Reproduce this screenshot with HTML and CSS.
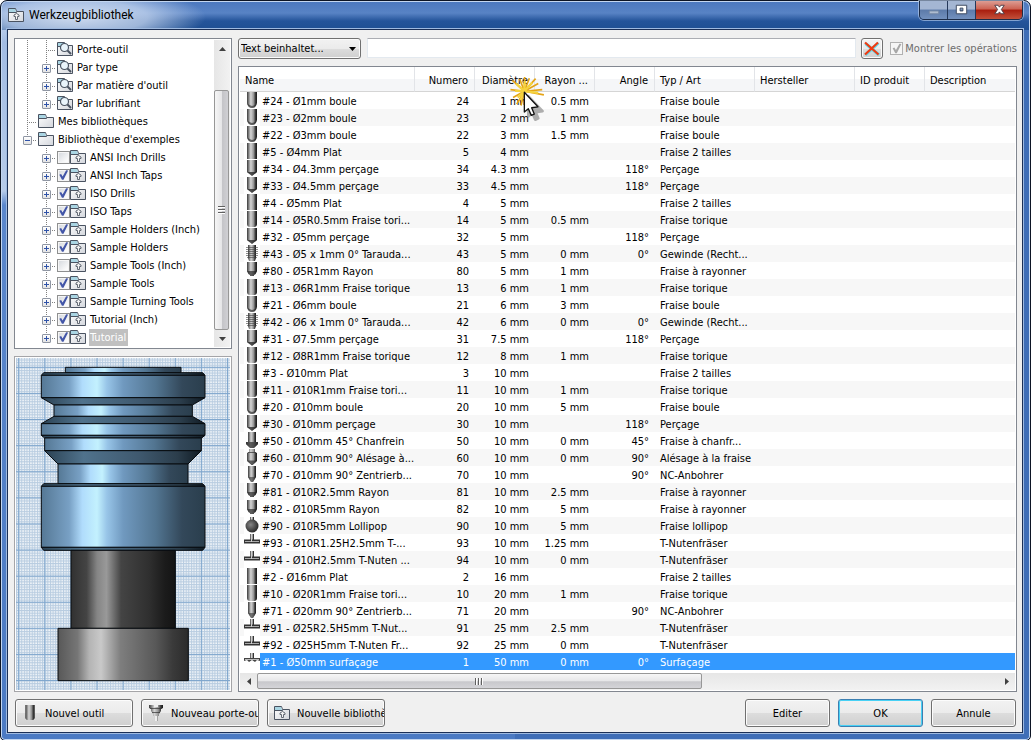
FILE: index.html
```html
<!DOCTYPE html>
<html lang="fr">
<head>
<meta charset="utf-8">
<title>Werkzeugbibliothek</title>
<link rel="stylesheet" href="styles.css">
</head>
<body>
<svg class="defs" aria-hidden="true">
  <defs>
    <linearGradient id="steel" x1="0" x2="1" y1="0" y2="0">
      <stop offset="0" stop-color="#3a3a3a"/><stop offset=".15" stop-color="#777"/><stop offset=".38" stop-color="#d6d6d6"/><stop offset=".65" stop-color="#999"/><stop offset=".85" stop-color="#3a3a3a"/><stop offset="1" stop-color="#161616"/>
    </linearGradient>
    <radialGradient id="sphere" cx=".4" cy=".4" r=".6">
      <stop offset="0" stop-color="#858585"/><stop offset="1" stop-color="#2b2b2b"/>
    </radialGradient>
    <linearGradient id="folderfill" x1="0" x2="1" y1="0" y2="1">
      <stop offset="0" stop-color="#fff"/><stop offset="1" stop-color="#d3d6dc"/>
    </linearGradient>
    <linearGradient id="blue" x1="0" x2="1" y1="0" y2="0">
      <stop offset="0" stop-color="#557895"/><stop offset=".17" stop-color="#78a0c4"/><stop offset=".25" stop-color="#b0dcfc"/><stop offset=".34" stop-color="#c3f1fe"/><stop offset=".4" stop-color="#98c5e8"/><stop offset=".5" stop-color="#7099bf"/><stop offset=".7" stop-color="#527591"/><stop offset=".86" stop-color="#33485a"/><stop offset="1" stop-color="#2a3e4d"/>
    </linearGradient>
    <linearGradient id="slope" x1="0" x2="1" y1="0" y2="0">
      <stop offset="0" stop-color="#2b4254"/><stop offset=".25" stop-color="#50728c"/><stop offset=".6" stop-color="#3f596f"/><stop offset=".85" stop-color="#2b3d4b"/><stop offset="1" stop-color="#101b24"/>
    </linearGradient>
    <linearGradient id="coat" x1="0" x2="1" y1="0" y2="0">
      <stop offset="0" stop-color="#313131"/><stop offset=".15" stop-color="#444"/><stop offset=".25" stop-color="#858585"/><stop offset=".34" stop-color="#999"/><stop offset=".48" stop-color="#444"/><stop offset=".75" stop-color="#2f2f2f"/><stop offset=".9" stop-color="#1b1b1b"/><stop offset="1" stop-color="#141414"/>
    </linearGradient>
    <linearGradient id="cutter" x1="0" x2="1" y1="0" y2="0">
      <stop offset="0" stop-color="#585858"/><stop offset=".15" stop-color="#767676"/><stop offset=".24" stop-color="#b4b4b4"/><stop offset=".33" stop-color="#c9c9c9"/><stop offset=".48" stop-color="#7e7e7e"/><stop offset=".75" stop-color="#585858"/><stop offset=".88" stop-color="#3a3a3a"/><stop offset="1" stop-color="#2b2b2b"/>
    </linearGradient>
    <pattern id="minor" x="56" y="52" width="7.83" height="7.83" patternUnits="userSpaceOnUse">
      <path d="M0 1.5H7.83M1.5 0V7.83" stroke="#9fbbd6" stroke-width="3" opacity=".7"/>
    </pattern>
    <pattern id="major" x="54.5" y="50.5" width="78.3" height="78.3" patternUnits="userSpaceOnUse">
      <path d="M0 1.5H78.3M1.5 0V78.3" stroke="#7fa6cd" stroke-width="3"/>
    </pattern>
  </defs>
  <symbol id="t-ball" viewBox="0 0 16 17"><path d="M3 0H13V11Q12 16 8 16Q4 16 3 11Z" fill="url(#steel)"/><path d="M3 11Q4 16 8 16Q12 16 13 11Q10 14 8 14Q6 14 3 11Z" fill="#333" opacity=".7"/></symbol>
  <symbol id="t-flat" viewBox="0 0 16 17"><path d="M3 0H13V16H3Z" fill="url(#steel)"/></symbol>
  <symbol id="t-bull" viewBox="0 0 16 17"><path d="M3 0H13V13Q13 16 10 16H6Q3 16 3 13Z" fill="url(#steel)"/></symbol>
  <symbol id="t-drill" viewBox="0 0 16 17"><path d="M3 0H13V12L8 16L3 12Z" fill="url(#steel)"/><path d="M3 12H13L8 16Z" fill="#222" opacity=".75"/></symbol>
  <symbol id="t-radius" viewBox="0 0 16 17"><path d="M3 0H13V9Q12 12 10 13V14H6V13Q4 12 3 9Z" fill="url(#steel)"/><path d="M3 9H13Q12 12 10 13V14H6V13Q4 12 3 9Z" fill="#222" opacity=".65"/></symbol>
  <symbol id="t-tap" viewBox="0 0 16 17"><path d="M4 0H12V13L11 16H5L4 13Z" fill="url(#steel)"/><path d="M2 2.500H14M2 4.500H14M2 6.500H14M2 8.500H14M2 10.500H14M3 12.500H13" stroke="#444" opacity=".6"/></symbol>
  <symbol id="t-chamfer" viewBox="0 0 16 17"><path d="M4 0H12V10H4Z" fill="url(#steel)"/><path d="M2 10H14V12L10 16H6L2 12Z" fill="url(#steel)"/><path d="M2 10H14V12L10 16H6L2 12Z" fill="#333" opacity=".75"/></symbol>
  <symbol id="t-ream" viewBox="0 0 16 17"><path d="M5 0H11V3L13 4V12L9 16H7L3 12V4L5 3Z" fill="url(#steel)"/><path d="M4 3.500H12M4 12H12L8 16Z" stroke="#333" fill="#333" opacity=".7"/></symbol>
  <symbol id="t-spot" viewBox="0 0 16 17"><path d="M4 0H12V11L9 16H7L4 11Z" fill="url(#steel)"/><path d="M4 11H12L9 16H7Z" fill="#333" opacity=".6"/></symbol>
  <symbol id="t-lollipop" viewBox="0 0 16 17"><path d="M6 0H10V4H6Z" fill="url(#steel)"/><circle cx="8" cy="9" r="6.500" fill="url(#sphere)"/></symbol>
  <symbol id="t-slot" viewBox="0 0 16 17"><path d="M6 0H10V6H6Z" fill="url(#steel)"/><path d="M0 5.500H16V9.500H0Z" fill="#333"/><path d="M1 7.500H15" stroke="#aaa"/><path d="M7.500 1V8" stroke="#ccc"/></symbol>
  <symbol id="t-face" viewBox="0 0 16 17"><path d="M6 0H10V5H6Z" fill="url(#steel)"/><path d="M0 5H16V8L13 7L11 9L8 7L5 9L3 7L0 8Z" fill="#444"/><path d="M1 6.500H15" stroke="#bbb"/></symbol>
  <symbol id="i-folder" viewBox="0 0 16 16"><path d="M.5 14.500V1.500H7.500L8.500 4.500H15.500V14.500Z" fill="url(#folderfill)" stroke="#4a5361"/><path d="M1 2H7L8 5H1Z" fill="#a9d5e3"/><path d="M.5 5.500H8.500L9.500 4.500" stroke="#4a5361" fill="none"/></symbol>
  <symbol id="i-search" viewBox="0 0 16 16"><use href="#i-folder"/><circle cx="7.500" cy="6.500" r="4" fill="#e9f4fb" stroke="#4a5361" stroke-width="1.200"/><path d="M10.500 9.500L14 13" stroke="#4a5361" stroke-width="2"/></symbol>
  <symbol id="i-lib" viewBox="0 0 16 16"><use href="#i-folder"/><path d="M8.500 6.500L6 8V9.500H7.500V12.500H9.500V9.500H11V8Z" fill="#f4f4f4" stroke="#555c68" stroke-width=".9"/></symbol>
</svg>

<div class="window">
  <header class="titlebar">
    <svg class="icon"><use href="#i-lib"/></svg>
    <h1>Werkzeugbibliothek</h1>
    <div class="winbtns">
      <button class="wb min" aria-label="Réduire"><svg viewBox="0 0 28 19"><path d="M9.500 10.500H19.500V13.500H9.500Z" fill="#aebcd0" stroke="#7487a5"/></svg></button>
      <button class="wb max" aria-label="Agrandir"><svg viewBox="0 0 28 19"><path d="M8.500 4.500H19.500V13.500H8.500ZM12.500 7.500V10.500H15.500V7.500Z" fill="#fff" fill-rule="evenodd" stroke="#39465c"/></svg></button>
      <button class="wb close" aria-label="Fermer"><svg viewBox="0 0 46 19"><path d="M18.500 4.500H22L23.500 6.500L25 4.500H28.500L25.500 9L28.500 13.500H25L23.500 11.500L22 13.500H18.500L21.500 9Z" fill="#fff" stroke="#4c3b45"/></svg></button>
    </div>
  </header>

  <main class="content">
    <div class="panes">
      <aside class="side">
        <div class="tree">
          <ul class="nodes" id="nodes"></ul>
          <div class="vscroll" role="scrollbar" aria-label="Arborescence" aria-controls="nodes" aria-valuenow="100">
            <button class="arrow" aria-label="Haut"><svg viewBox="0 0 7 4"><path d="M0 4L3.500 0L7 4Z"/></svg></button>
            <div class="track"><span class="thumb"><i class="grip"></i></span></div>
            <button class="arrow" aria-label="Bas"><svg viewBox="0 0 7 4"><path d="M0 0L3.500 4L7 0Z"/></svg></button>
          </div>
        </div>
        <div class="preview">
          <svg viewBox="48 24 642 996" preserveAspectRatio="xMidYMin slice" role="img" aria-label="Aperçu">
            <rect x="48" y="24" width="642" height="996" fill="#f1f5f9"/>
            <rect x="48" y="24" width="642" height="996" fill="url(#minor)"/>
            <rect x="48" y="24" width="642" height="996" fill="url(#major)"/>
            <g stroke="#080c10" stroke-width="3" stroke-linejoin="round">
              <path d="M196 52H543V68H196Z" fill="url(#blue)"/>
              <path d="M131 68H608L615 76H124Z" fill="url(#slope)"/>
              <path d="M124 76H615V143H124Z" fill="url(#blue)"/>
              <path d="M124 143H615L577 165H162Z" fill="url(#slope)"/>
              <path d="M162 165H577V199H162Z" fill="url(#blue)"/>
              <path d="M162 199H577L615 221H124Z" fill="url(#slope)"/>
              <path d="M124 221H615V256H124Z" fill="url(#blue)"/>
              <path d="M124 256H615L605 264H134Z" fill="url(#slope)"/>
              <path d="M134 264H604V302H134Z" fill="url(#blue)"/>
              <path d="M134 302H604L564 342H174Z" fill="url(#slope)"/>
              <path d="M174 342H564V401H174Z" fill="url(#blue)"/>
              <path d="M131 401H608L615 409H124Z" fill="url(#slope)"/>
              <path d="M124 409H615V592H124Z" fill="url(#blue)"/>
              <path d="M124 592H615L608 601H131Z" fill="url(#slope)"/>
              <path d="M213 601H526V835H213Z" fill="url(#coat)"/>
              <path d="M174 835H565V992H174Z" fill="url(#cutter)"/>
            </g>
          </svg>
        </div>
      </aside>

      <section class="main">
        <form class="filter">
          <span class="combo">
            <select aria-label="Filtre"><option>Text beinhaltet...</option></select>
            <svg viewBox="0 0 7 4"><path d="M0 0H7L3.500 4Z"/></svg>
          </span>
          <input class="query" type="text" aria-label="Texte du filtre">
          <button class="clear" type="button" aria-label="Effacer"><svg viewBox="0 0 16 16"><path d="M1.500 2.500L15 14M14.500 2L1.500 14" stroke="#5fd7e8" stroke-width="3"/><path d="M1 1.500L14.500 13.500M14 1.500L1 13.500" stroke="#f03a10" stroke-width="2.200"/></svg></button>
          <label class="ops"><input class="tick" type="checkbox" checked disabled>Montrer les opérations</label>
        </form>
        <div class="list">
          <table>
            <colgroup><col class="c-name"><col class="c-num"><col class="c-num"><col class="c-num"><col class="c-num"><col class="c-text"><col class="c-text"><col class="c-id"><col></colgroup>
            <thead>
              <tr>
                <th>Name</th><th class="num">Numero</th>
                <th class="num sorted">Diamètre
                  <svg class="pointer" viewBox="110 125 120 160" aria-hidden="true">
                    <path d="M174 198V259L186 249L195 269L204 265L196 246L217 243Z" fill="#555" opacity=".45" stroke="#555" stroke-width="8" stroke-linejoin="round"/>
                    <path d="M162 183L120 178M162 183L128 202M162 183L139 222M162 183L152 226M162 183L126 150M162 183L148 146M162 183L163 140M162 183L177 144M162 183L196 145M162 183L216 178M162 183L221 194M162 183L204 160" stroke="#e5a416" stroke-width="5"/>
                    <path d="M162 183L134 182M162 183L142 202M162 183L137 160M162 183L163 152M162 183L186 157M162 183L204 188M162 183L150 210" stroke="#f5d33e" stroke-width="7"/>
                    <path d="M162 186V246L174 236L183 256L192 252L184 233L203 230Z" fill="#fff" stroke="#111" stroke-width="4" stroke-linejoin="round"/>
                  </svg>
                </th>
                <th class="num">Rayon ...</th><th class="num">Angle</th><th>Typ / Art</th><th>Hersteller</th><th>ID produit</th><th>Description</th>
              </tr>
            </thead>
            <tbody id="rows"></tbody>
          </table>
          <div class="hscroll" role="scrollbar" aria-label="Liste" aria-controls="rows" aria-orientation="horizontal" aria-valuenow="0">
            <button class="arrow" aria-label="Gauche"><svg viewBox="0 0 4 7"><path d="M4 0L0 3.500L4 7Z"/></svg></button>
            <div class="track"><span class="thumb"><i class="grip"></i></span></div>
            <button class="arrow" aria-label="Droite"><svg viewBox="0 0 4 7"><path d="M0 0L4 3.500L0 7Z"/></svg></button>
          </div>
        </div>
      </section>
    </div>

    <footer class="actions">
      <button class="btn create"><svg class="icon"><use href="#t-bull"/></svg><span>Nouvel outil</span></button>
      <button class="btn create"><svg class="icon" viewBox="0 0 16 16"><path d="M1 0H15V3L13 4V6L11 9V11H10V16H6V11H5V9L3 6V4L1 3Z" fill="url(#steel)"/><path d="M6 0H10V2H6ZM7 11H9V16H7Z" fill="#eee"/><path d="M2 3.500H14M4 7.500H12" stroke="#333" opacity=".7"/></svg><span>Nouveau porte-outil</span></button>
      <button class="btn create"><svg class="icon"><use href="#i-lib"/></svg><span>Nouvelle bibliothèque</span></button>
      <div class="dialog">
        <button class="btn">Editer</button>
        <button class="btn default">OK</button>
        <button class="btn">Annule</button>
      </div>
    </footer>
  </main>
</div>
<script src="app.js"></script>
</body>
</html>
```
FILE: app.js
```js
// label, level, icon, expander, checkbox (null = none), guide classes
const nodes = [
  ["Porte-outil", 2, "i-search", "", null],
  ["Par type", 2, "i-search", "+", null],
  ["Par matière d'outil", 2, "i-search", "+", null],
  ["Par lubrifiant", 2, "i-search", "+", null, "last"],
  ["Mes bibliothèques", 1, "i-folder", "", null],
  ["Bibliothèque d'exemples", 1, "i-folder", "-", null, "last"],
  ["ANSI Inch Drills", 3, "i-lib", "+", false],
  ["ANSI Inch Taps", 3, "i-lib", "+", true],
  ["ISO Drills", 3, "i-lib", "+", true],
  ["ISO Taps", 3, "i-lib", "+", true],
  ["Sample Holders (Inch)", 3, "i-lib", "+", true],
  ["Sample Holders", 3, "i-lib", "+", true],
  ["Sample Tools (Inch)", 3, "i-lib", "+", false],
  ["Sample Tools", 3, "i-lib", "+", true],
  ["Sample Turning Tools", 3, "i-lib", "+", true],
  ["Tutorial (Inch)", 3, "i-lib", "+", true],
  ["Tutorial", 3, "i-lib", "+", true, "last selected"]
];

document.getElementById("nodes").innerHTML = nodes.map(([text, level, icon, exp, check, cls = ""], i) => {
  const lead = level === 1 ? "" : `<span class="guide ${level === 2 ? "line" : ""}"></span>`;
  const toggle = exp ? `<button class="toggle ${exp === "-" ? "open" : ""}" aria-label="${text}"></button>` : "";
  const box = check === null ? "" : `<input class="tick" type="checkbox" id="n${i}" ${check ? "checked" : ""}>`;
  const tag = check === null ? `<span class="name">${text}</span>` : `<label class="name" for="n${i}">${text}</label>`;
  return `<li class="node ${cls}">${lead}<span class="guide line branch">${toggle}</span>${box}<svg class="icon"><use href="#${icon}"/></svg>${tag}</li>`;
}).join("");

const tools = `
ball|#24 - Ø1mm boule|24|1 mm|0.5 mm||Fraise boule
ball|#23 - Ø2mm boule|23|2 mm|1 mm||Fraise boule
ball|#22 - Ø3mm boule|22|3 mm|1.5 mm||Fraise boule
flat|#5 - Ø4mm Plat|5|4 mm|||Fraise 2 tailles
drill|#34 - Ø4.3mm perçage|34|4.3 mm||118°|Perçage
drill|#33 - Ø4.5mm perçage|33|4.5 mm||118°|Perçage
flat|#4 - Ø5mm Plat|4|5 mm|||Fraise 2 tailles
bull|#14 - Ø5R0.5mm Fraise tori...|14|5 mm|0.5 mm||Fraise torique
drill|#32 - Ø5mm perçage|32|5 mm||118°|Perçage
tap|#43 - Ø5 x 1mm 0° Tarauda...|43|5 mm|0 mm|0°|Gewinde (Recht...
radius|#80 - Ø5R1mm Rayon|80|5 mm|1 mm||Fraise à rayonner
bull|#13 - Ø6R1mm Fraise torique|13|6 mm|1 mm||Fraise torique
ball|#21 - Ø6mm boule|21|6 mm|3 mm||Fraise boule
tap|#42 - Ø6 x 1mm 0° Tarauda...|42|6 mm|0 mm|0°|Gewinde (Recht...
drill|#31 - Ø7.5mm perçage|31|7.5 mm||118°|Perçage
bull|#12 - Ø8R1mm Fraise torique|12|8 mm|1 mm||Fraise torique
flat|#3 - Ø10mm Plat|3|10 mm|||Fraise 2 tailles
bull|#11 - Ø10R1mm Fraise tori...|11|10 mm|1 mm||Fraise torique
ball|#20 - Ø10mm boule|20|10 mm|5 mm||Fraise boule
drill|#30 - Ø10mm perçage|30|10 mm||118°|Perçage
chamfer|#50 - Ø10mm 45° Chanfrein|50|10 mm|0 mm|45°|Fraise à chanfr...
ream|#60 - Ø10mm 90° Alésage à...|60|10 mm|0 mm|90°|Alésage à la fraise
spot|#70 - Ø10mm 90° Zentrierb...|70|10 mm||90°|NC-Anbohrer
radius|#81 - Ø10R2.5mm Rayon|81|10 mm|2.5 mm||Fraise à rayonner
radius|#82 - Ø10R5mm Rayon|82|10 mm|5 mm||Fraise à rayonner
lollipop|#90 - Ø10R5mm Lollipop|90|10 mm|5 mm||Fraise lollipop
slot|#93 - Ø10R1.25H2.5mm T-...|93|10 mm|1.25 mm||T-Nutenfräser
slot|#94 - Ø10H2.5mm T-Nuten ...|94|10 mm|0 mm||T-Nutenfräser
flat|#2 - Ø16mm Plat|2|16 mm|||Fraise 2 tailles
bull|#10 - Ø20R1mm Fraise tori...|10|20 mm|1 mm||Fraise torique
spot|#71 - Ø20mm 90° Zentrierb...|71|20 mm||90°|NC-Anbohrer
slot|#91 - Ø25R2.5H5mm T-Nut...|91|25 mm|2.5 mm||T-Nutenfräser
slot|#92 - Ø25H5mm T-Nuten Fr...|92|25 mm|0 mm||T-Nutenfräser
face|#1 - Ø50mm surfaçage|1|50 mm|0 mm|0°|Surfaçage`.trim().split("\n").map(l => l.split("|"));

document.getElementById("rows").innerHTML = tools.map(([icon, name, no, dia, rad, ang, type], i) =>
  `<tr class="${i === tools.length - 1 ? "selected" : ""}">
    <td class="tool"><svg class="ticon"><use href="#t-${icon}"/></svg><span>${name}</span></td>
    <td class="num">${no}</td><td class="num">${dia}</td><td class="num">${rad}</td><td class="num">${ang}</td>
    <td>${type}</td><td></td><td></td><td></td></tr>`).join("");
```
FILE: styles.css
```css
* { box-sizing: border-box; }

body {
  margin: 0;
  background: #fff;
  color: #000;
  font: 11px/17px "DejaVu Sans Condensed", "DejaVu Sans", sans-serif;
}

button, input, select { font: inherit; color: inherit; margin: 0; padding: 0; }
svg { display: block; }
.defs { position: absolute; width: 0; height: 0; }
.icon { width: 16px; height: 16px; flex: none; }

/* Window frame */
.window {
  min-height: 100vh;
  display: flex;
  flex-direction: column;
  padding: 0 7px 7px 6px;
  border: 1px solid #0c1424;
  border-radius: 7px 7px 5px 5px;
  box-shadow: inset 0 0 0 1px #c3d6f0;
  background:
    radial-gradient(ellipse 130px 30px at 75px 16px, rgba(215, 226, 243, .95), rgba(200, 216, 240, .75) 55%, transparent),
    linear-gradient(#4b78bf 0, #5883c5 12px, #24549a 20px, #1f4f92 29px, transparent 29px),
    linear-gradient(90deg, transparent 50%, #3f6eb7 50%),
    linear-gradient(#9db8e2 0, #b6cbe9 190px, #5b87cc 204px, #4b7ac3 100%);
}

.titlebar {
  display: flex;
  align-items: center;
  height: 28px;
  padding-left: 1px;
}
.titlebar h1 {
  flex: 1;
  margin: 0 0 0 5px;
  font: 12px/16px Roboto, sans-serif;
}
.winbtns {
  display: flex;
  align-self: flex-start;
  height: 19px;
  border: 1px solid #1c2c48;
  border-top: 0;
  border-radius: 0 0 5px 5px;
  box-shadow: 0 0 0 1px rgba(190, 210, 240, .6);
  overflow: hidden;
}
.wb {
  width: 28px;
  border: 0;
  border-right: 1px solid #24385a;
  background: linear-gradient(#a4b6d3 45%, #5c7aa9 50%, #7391be);
}
.wb svg { width: 100%; height: 100%; }
.wb.close {
  width: 46px;
  border-right: 0;
  background: linear-gradient(#dd9d93 0, #cc6151 45%, #a81d0e 50%, #c2503a);
}

.content {
  flex: 1;
  display: flex;
  flex-direction: column;
  gap: 7px;
  padding: 8px 5px 5px 6px;
  border: 1px solid #1b2f55;
  box-shadow: 0 0 0 1px #9fbae0;
  background: #f0f0f0;
}
.panes { flex: 1; display: flex; gap: 6px; }
.side { width: 218px; flex: none; display: flex; flex-direction: column; gap: 7px; }

/* Tree */
.tree {
  display: flex;
  padding: 1px;
  border: 1px solid #828790;
  background: #fff;
}
.nodes { flex: 1; margin: 0; padding: 0 0 1px 2px; list-style: none; }
.node { display: flex; align-items: center; height: 18px; }
.guide { width: 19px; height: 18px; flex: none; }
.guide.line {
  background: repeating-linear-gradient(#808080 0 1px, transparent 1px 2px) 9px 0 / 1px 100% no-repeat;
}
.guide.branch {
  margin-right: 1px;
  display: flex;
  align-items: center;
  padding: 2px 0 0 5px;
  background:
    repeating-linear-gradient(#808080 0 1px, transparent 1px 2px) 9px 0 / 1px 100% no-repeat,
    repeating-linear-gradient(90deg, #808080 0 1px, transparent 1px 2px) 9px 10px / 10px 1px no-repeat;
}
.last .guide.branch { background-size: 1px 10px, 10px 1px; }
.toggle {
  width: 9px;
  height: 9px;
  border: 1px solid #8f96a3;
  border-radius: 1px;
  background:
    linear-gradient(#2f52a8, #2f52a8) center / 5px 1px no-repeat,
    linear-gradient(#2f52a8, #2f52a8) center / 1px 5px no-repeat,
    linear-gradient(#fff, #e3e3e3);
}
.toggle.open {
  background:
    linear-gradient(#2f52a8, #2f52a8) center / 5px 1px no-repeat,
    linear-gradient(#fff, #e3e3e3);
}
.name { margin-left: 3px; padding: 0 2px 0 1px; white-space: nowrap; }
.selected .name { background: #c0c0c0; color: #fff; }

.tick {
  appearance: none;
  width: 13px;
  height: 13px;
  flex: none;
  border: 1px solid #8e8f8f;
  background: linear-gradient(135deg, #d3d7dc, #fbfbfb 80%);
  box-shadow: inset 0 0 0 1px #f6f6f6;
}
.tick:checked::before {
  content: "";
  display: block;
  height: 100%;
  background: #4356a8;
  clip-path: polygon(12% 48%, 28% 42%, 42% 64%, 74% 6%, 92% 10%, 50% 94%, 36% 94%);
}
.tick:disabled { border-color: #b1b1b1; background: #f6f6f6; }
.tick:disabled::before { background: #a8a8a8; }

/* Scroll bars */
.arrow { display: grid; place-items: center; border: 0; background: none; fill: #404040; flex: none; }
.track { flex: 1; display: flex; }
.thumb {
  display: grid;
  place-items: center;
  border: 1px solid #979797;
  border-radius: 2px;
}
.vscroll { width: 16px; display: flex; flex-direction: column; background: linear-gradient(90deg, #e6e6e6, #f2f2f2); }
.vscroll .arrow { height: 17px; }
.vscroll .arrow svg { width: 7px; height: 4px; }
.vscroll .track { align-items: flex-end; }
.vscroll .thumb { width: 15px; height: 88%; background: linear-gradient(90deg, #f6f6f6, #e6e6e8 50%, #c4c4c8 55%, #d0d0d4); }
.vscroll .grip { width: 7px; height: 8px; background: repeating-linear-gradient(#606060 0 1px, #fff 1px 2px, transparent 2px 3px); }
.hscroll { display: flex; height: 17px; background: linear-gradient(#e6e6e6, #f2f2f2); }
.hscroll .arrow { width: 17px; }
.hscroll .arrow svg { width: 4px; height: 7px; }
.hscroll .thumb { width: 60%; height: 16px; background: linear-gradient(#f6f6f6, #e6e6e8 50%, #c8c8cc 55%, #d4d4d8); }
.hscroll .grip { width: 8px; height: 7px; background: repeating-linear-gradient(90deg, #606060 0 1px, #fff 1px 2px, transparent 2px 3px); }

/* Tool preview */
.preview {
  flex: 1;
  display: flex;
  padding: 1px;
  border: 1px solid #a5a5a8;
  background: #fff;
}
.preview svg { width: 100%; height: auto; }

/* Filter bar */
.main { flex: 1; min-width: 0; display: flex; flex-direction: column; gap: 7px; }
.filter { display: flex; height: 21px; }
.combo { display: flex; align-items: center; width: 123px; margin-right: 6px; }
.combo select {
  appearance: none;
  width: 100%;
  height: 21px;
  padding: 0 16px 0 2px;
  border: 1px solid #707070;
  border-radius: 3px;
  box-shadow: inset 0 0 0 1px #fbfbfb;
  background: linear-gradient(#f2f2f2 0, #ebebeb 50%, #dddddd 50%, #cfcfcf);
}
.combo svg { width: 7px; height: 4px; margin-left: -12px; margin-right: 5px; flex: none; pointer-events: none; }
.query {
  flex: 1;
  min-width: 0;
  height: 20px;
  margin-right: 5px;
  border: 1px solid #e3e9ef;
  border-top-color: #abadb3;
  border-radius: 1px;
  background: #fff;
}
.clear {
  display: grid;
  place-items: center;
  width: 22px;
  margin-right: 7px;
  border: 1px solid #707070;
  border-radius: 3px;
  box-shadow: inset 0 0 0 1px #fbfbfb;
  background: linear-gradient(#f2f2f2 0, #ebebeb 50%, #dddddd 50%, #cfcfcf);
}
.clear svg { width: 16px; height: 16px; }
.ops { display: flex; align-items: center; gap: 2px; color: #6d6d6d; white-space: nowrap; }

/* Tool list */
.list {
  flex: 1;
  display: flex;
  flex-direction: column;
  justify-content: space-between;
  padding: 0 1px 1px;
  border: 1px solid #828790;
  background: #fff;
}
table { width: 100%; table-layout: fixed; border-collapse: separate; border-spacing: 0; }
.c-name { width: 175px; }
.c-num { width: 60px; }
.c-text { width: 100px; }
.c-id { width: 70px; }
th {
  height: 25px;
  padding: 2px 5px 0;
  border-right: 1px solid #e2e4e8;
  border-bottom: 1px solid #d5d5d5;
  background: linear-gradient(#fff 50%, #f5f6f8 50%);
  font-weight: normal;
  text-align: left;
  white-space: nowrap;
}
td { height: 17px; padding: 2px 5px 0; line-height: 15px; white-space: nowrap; }
th:last-child { border-right: 0; }
.num { text-align: right; }
th.num, td.num { padding-right: 6px; }
.sorted { position: relative; }
.pointer { position: absolute; left: 32px; top: 5px; width: 40px; height: 53px; z-index: 1; }
tbody tr:nth-child(even) td { background: #f7f7f7; }
tbody td.tool { display: flex; padding: 0 0 0 4px; }
.ticon { width: 16px; height: 17px; flex: none; background: #fff; }
.tool span { padding: 2px 0 0 2px; flex: 1; }
tbody tr.selected td, .selected .tool span { background: #3399ff; color: #fff; }
tbody tr.selected td.tool { background: #fff; }

/* Buttons */
.actions { display: flex; gap: 8px; height: 28px; padding-left: 1px; }
.btn {
  width: 85px;
  border: 1px solid #707070;
  border-radius: 3px;
  box-shadow: inset 0 0 0 1px #fcfcfc;
  background: linear-gradient(#f2f2f2 0, #ebebeb 50%, #dddddd 50%, #cfcfcf);
}
.create {
  display: flex;
  align-items: center;
  gap: 7px;
  width: 118px;
  padding-left: 6px;
  overflow: hidden;
  white-space: nowrap;
}
.dialog { display: flex; gap: 8px; margin: 0 1px 0 auto; }
.default { border-color: #3c7fb1; box-shadow: inset 0 0 0 1px #48d1f5; }
```
